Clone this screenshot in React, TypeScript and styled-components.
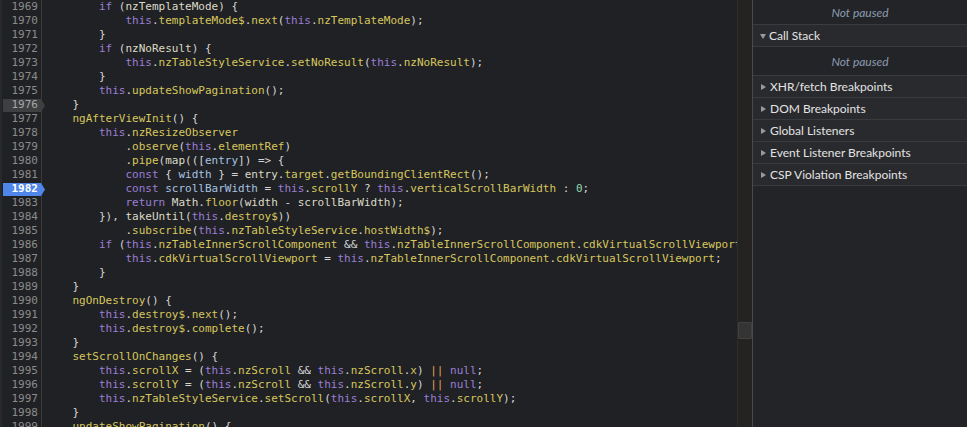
import React from 'react';
import styled, { createGlobalStyle } from 'styled-components';

const GlobalStyle = createGlobalStyle`
  html, body { margin: 0; padding: 0; background: #202124; }
  body { width: 967px; height: 427px; overflow: hidden; }
  #root { height: 427px; }
`;

const COLORS = {
  kw: '#9a7fd5',
  prop: '#d7c75e',
  vari: '#dcdac4',
  def: '#a6c3e2',
  num: '#97dcb4',
  op: '#e8a04e',
  punc: '#d6d6d6',
  ws: 'inherit',
};
type Kind = keyof typeof COLORS;

const KEYWORDS = new Set(['this', 'if', 'const', 'return', 'null']);

type LineDef = { n: number; text: string; defs?: string[]; bp?: 'blue' | 'gray' };

const LINES: LineDef[] = [
  { n: 1968, text: '        }' },
  { n: 1969, text: '        if (nzTemplateMode) {' },
  { n: 1970, text: '            this.templateMode$.next(this.nzTemplateMode);' },
  { n: 1971, text: '        }' },
  { n: 1972, text: '        if (nzNoResult) {' },
  { n: 1973, text: '            this.nzTableStyleService.setNoResult(this.nzNoResult);' },
  { n: 1974, text: '        }' },
  { n: 1975, text: '        this.updateShowPagination();' },
  { n: 1976, text: '    }', bp: 'gray' },
  { n: 1977, text: '    ngAfterViewInit() {' },
  { n: 1978, text: '        this.nzResizeObserver' },
  { n: 1979, text: '            .observe(this.elementRef)' },
  { n: 1980, text: '            .pipe(map(([entry]) => {', defs: ['entry'] },
  { n: 1981, text: '            const { width } = entry.target.getBoundingClientRect();', defs: ['width'] },
  { n: 1982, text: '            const scrollBarWidth = this.scrollY ? this.verticalScrollBarWidth : 0;', defs: ['scrollBarWidth'], bp: 'blue' },
  { n: 1983, text: '            return Math.floor(width - scrollBarWidth);' },
  { n: 1984, text: '        }), takeUntil(this.destroy$))' },
  { n: 1985, text: '            .subscribe(this.nzTableStyleService.hostWidth$);' },
  { n: 1986, text: '        if (this.nzTableInnerScrollComponent && this.nzTableInnerScrollComponent.cdkVirtualScrollViewport) {' },
  { n: 1987, text: '            this.cdkVirtualScrollViewport = this.nzTableInnerScrollComponent.cdkVirtualScrollViewport;' },
  { n: 1988, text: '        }' },
  { n: 1989, text: '    }' },
  { n: 1990, text: '    ngOnDestroy() {' },
  { n: 1991, text: '        this.destroy$.next();' },
  { n: 1992, text: '        this.destroy$.complete();' },
  { n: 1993, text: '    }' },
  { n: 1994, text: '    setScrollOnChanges() {' },
  { n: 1995, text: '        this.scrollX = (this.nzScroll && this.nzScroll.x) || null;' },
  { n: 1996, text: '        this.scrollY = (this.nzScroll && this.nzScroll.y) || null;' },
  { n: 1997, text: '        this.nzTableStyleService.setScroll(this.scrollX, this.scrollY);' },
  { n: 1998, text: '    }' },
  { n: 1999, text: '    updateShowPagination() {' },
];

type Tok = { t: string; k: Kind };

function tokenize(line: string, defs: string[] = []): Tok[] {
  const out: Tok[] = [];
  const re = /(\s+)|([A-Za-z_$][\w$]*)|(\d+)|(\|\|)|(.)/g;
  const isMethodDef = /^ {4}\w+\(\) \{$/.test(line);
  let prev = '';
  let m: RegExpExecArray | null;
  while ((m = re.exec(line))) {
    if (m[1]) {
      out.push({ t: m[1], k: 'ws' });
      continue;
    }
    if (m[2]) {
      const w = m[2];
      let k: Kind = 'vari';
      if (KEYWORDS.has(w)) k = 'kw';
      else if (prev === '.') k = 'prop';
      else if (isMethodDef) k = 'prop';
      else if (defs.includes(w)) k = 'def';
      out.push({ t: w, k });
      prev = w;
      continue;
    }
    if (m[3]) {
      out.push({ t: m[3], k: 'num' });
      prev = m[3];
      continue;
    }
    if (m[4]) {
      out.push({ t: m[4], k: 'op' });
      prev = m[4];
      continue;
    }
    out.push({ t: m[5], k: 'punc' });
    prev = m[5];
  }
  return out;
}

const Page = styled.div`
  display: flex;
  width: 967px;
  height: 427px;
  background: #202124;
  overflow: hidden;
`;

const Editor = styled.div`
  flex: 1;
  display: flex;
  min-width: 0;
  overflow: hidden;
  border-left: 2px solid #28292c;
`;

const Lines = styled.div`
  flex: 1;
  margin-top: -14px;
  min-width: 0;
`;

const Row = styled.div`
  display: flex;
  height: 14px;
`;

const Gutter = styled.div<{ $bp?: 'blue' | 'gray' }>`
  position: relative;
  flex: 0 0 40px;
  box-sizing: border-box;
  border-right: 1px solid #3a3a3a;
  padding-right: 3px;
  text-align: right;
  font-family: 'DejaVu Sans Mono', 'Liberation Mono', monospace;
  font-size: 11px;
  line-height: 14px;
  color: ${(p) => (p.$bp === 'blue' ? '#ffffff' : p.$bp === 'gray' ? '#a8a8a8' : '#8b8b8b')};
  font-weight: ${(p) => (p.$bp === 'blue' ? 700 : 400)};
  z-index: 1;
  &::before {
    content: '';
    display: ${(p) => (p.$bp ? 'block' : 'none')};
    position: absolute;
    left: 1px;
    right: -4px;
    top: 1px;
    bottom: 0px;
    z-index: -1;
    background: ${(p) => (p.$bp === 'blue' ? '#4e86ea' : '#3e3f41')};
    clip-path: polygon(0 0, calc(100% - 4px) 0, 100% 50%, calc(100% - 4px) 100%, 0 100%);
  }
`;

const Code = styled.pre`
  margin: 0;
  padding-left: 4px;
  font-family: 'DejaVu Sans Mono', 'Liberation Mono', monospace;
  font-size: 11px;
  line-height: 14px;
  white-space: pre;
  overflow: hidden;
  color: #d6d6d6;
`;

const Token = styled.span<{ $k: Kind }>`
  color: ${(p) => COLORS[p.$k]};
`;

const ScrollTrack = styled.div`
  flex: 0 0 14px;
  background: #242321;
  border-left: 1px solid #2e2d2b;
  display: flex;
  flex-direction: column;
`;

const ScrollThumb = styled.div<{ $top: number }>`
  margin-top: ${(p) => p.$top}px;
  height: 15px;
  background: #343434;
  border: 1px solid #404040;
  border-radius: 1px;
`;

const Sidebar = styled.div`
  flex: 0 0 215px;
  box-sizing: border-box;
  border-left: 1px solid #4a4a4a;
  background: #232427;
  display: flex;
  flex-direction: column;
  font-family: 'Segoe UI', Lato, 'Liberation Sans', sans-serif;
  font-size: 12px;
`;

const Placeholder = styled.div<{ $h: number }>`
  height: ${(p) => p.$h}px;
  display: flex;
  align-items: center;
  justify-content: center;
  font-style: italic;
  color: #8c9bb0;
  border-bottom: 1px solid #3a3b3e;
  background: #232427;
`;

const SectionHeader = styled.div`
  height: 21px;
  display: flex;
  align-items: center;
  padding-left: 7px;
  gap: 3px;
  color: #e3e3e3;
  background: #292a2d;
  border-bottom: 1px solid #3a3b3e;
`;

const Arrow = styled.span<{ $open?: boolean }>`
  width: 0;
  height: 0;
  ${(p) =>
    p.$open
      ? `border-left: 3.5px solid transparent; border-right: 3.5px solid transparent; border-top: 5px solid #9a9a9a; margin-top: 1px;`
      : `border-top: 3.5px solid transparent; border-bottom: 3.5px solid transparent; border-left: 5px solid #9a9a9a; margin-left: 1px; margin-right: 1px;`}
`;

const Label = styled.span`
  line-height: 21px;
`;

const SECTIONS = [
  'XHR/fetch Breakpoints',
  'DOM Breakpoints',
  'Global Listeners',
  'Event Listener Breakpoints',
  'CSP Violation Breakpoints',
];

export default function App() {
  return (
    <>
      <GlobalStyle />
      <Page>
        <Editor>
          <Lines>
            {LINES.map((l) => (
              <Row key={l.n}>
                <Gutter $bp={l.bp}>{l.n}</Gutter>
                <Code>
                  {tokenize(l.text, l.defs).map((t, i) => (
                    <Token key={i} $k={t.k}>
                      {t.t}
                    </Token>
                  ))}
                </Code>
              </Row>
            ))}
          </Lines>
          <ScrollTrack>
            <ScrollThumb $top={322} />
          </ScrollTrack>
        </Editor>
        <Sidebar>
          <Placeholder $h={24}>Not paused</Placeholder>
          <SectionHeader>
            <Arrow $open />
            <Label>Call Stack</Label>
          </SectionHeader>
          <Placeholder $h={28}>Not paused</Placeholder>
          {SECTIONS.map((s) => (
            <SectionHeader key={s}>
              <Arrow />
              <Label>{s}</Label>
            </SectionHeader>
          ))}
        </Sidebar>
      </Page>
    </>
  );
}
